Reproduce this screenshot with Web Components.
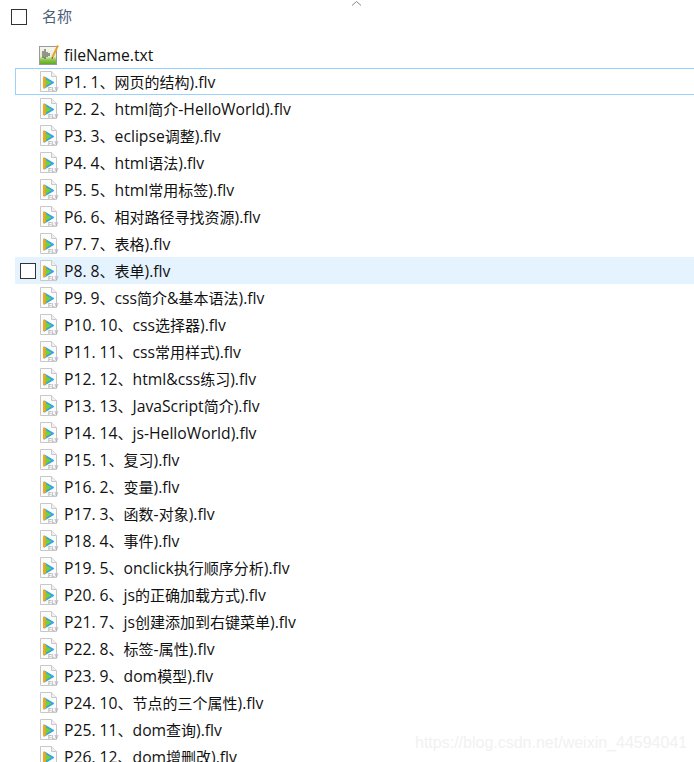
<!DOCTYPE html>
<html>
<head>
<meta charset="utf-8">
<style>
  html, body { margin: 0; height: 762px; overflow: hidden; background: #fff; }
</style>
</head>
<body>
<file-list></file-list>

<script>
const files = [
  "P1. 1、网页的结构).flv", "P2. 2、html简介-HelloWorld).flv", "P3. 3、eclipse调整).flv",
  "P4. 4、html语法).flv", "P5. 5、html常用标签).flv", "P6. 6、相对路径寻找资源).flv",
  "P7. 7、表格).flv", "P8. 8、表单).flv", "P9. 9、css简介&基本语法).flv",
  "P10. 10、css选择器).flv", "P11. 11、css常用样式).flv", "P12. 12、html&css练习).flv",
  "P13. 13、JavaScript简介).flv", "P14. 14、js-HelloWorld).flv", "P15. 1、复习).flv",
  "P16. 2、变量).flv", "P17. 3、函数-对象).flv", "P18. 4、事件).flv",
  "P19. 5、onclick执行顺序分析).flv", "P20. 6、js的正确加载方式).flv", "P21. 7、js创建添加到右键菜单).flv",
  "P22. 8、标签-属性).flv", "P23. 9、dom模型).flv", "P24. 10、节点的三个属性).flv",
  "P25. 11、dom查询).flv", "P26. 12、dom增删改).flv"
];

const txtIcon = `<svg width="22" height="22" viewBox="0 0 22 22">
  <defs><linearGradient id="g" x1="0" y1="0" x2="0" y2="1">
    <stop offset="0" stop-color="#f7f7f2"/><stop offset=".55" stop-color="#e6edd2"/><stop offset=".75" stop-color="#8cc63f"/><stop offset="1" stop-color="#5aa821"/>
  </linearGradient></defs>
  <rect x="1.5" y="2.5" width="17" height="18" fill="url(#g)" stroke="#9a9a9a"/>
  <path d="M5 7v7M7 5v10M9 8v5M11 9v3" stroke="#3a3a3a" stroke-width="1" fill="none"/>
  <path d="M14.5 13L20 1.5" stroke="#e8a030" stroke-width="2" fill="none"/>
  <path d="M14.5 13l-.5 2" stroke="#555" fill="none"/>
</svg>`;

const flvIcon = `<svg width="22" height="22" viewBox="0 0 22 22">
  <path d="M2.5 .5h11l5 5v15h-16z" fill="#fcfcfc" stroke="#c8c8c8"/>
  <path d="M13.5 .5v5h5" fill="#f0f0f0" stroke="#c8c8c8"/>
  <path d="M6.5 6.5L15 11.5L6.5 16.5z" fill="#2aa9e6" stroke="#2aa9e6" stroke-width="2" stroke-linejoin="round"/>
  <path d="M5.5 6L7.5 7V16L5.5 17z" fill="#f5a51e" stroke="#f5a51e" stroke-linejoin="round"/>
  <path d="M7.5 8L13.5 11.5L7.5 15z" fill="#7ecb35"/>
  <text x="10" y="20" font-family="Liberation Sans, sans-serif" font-size="5.6" font-weight="700" fill="#b0b0b0">FLV</text>
</svg>`;

class CheckBox extends HTMLElement {
  constructor() {
    super();
    this.attachShadow({ mode: "open" });
    this.shadowRoot.innerHTML = `
      <style>
        :host { display: block; width: 16px; height: 16px; box-sizing: border-box; border: 1px solid #333; background: #fff; }
      </style>`;
  }
}

class ListHeader extends HTMLElement {
  constructor() {
    super();
    this.attachShadow({ mode: "open" });
    this.shadowRoot.innerHTML = `
      <style>
        :host { display: flex; align-items: center; height: 33px; padding-left: 11px; position: relative; color: #4c607a; font-size: 15px; }
        span { margin-left: 15px; position: relative; top: -1px; }
        svg { position: absolute; left: 351px; top: 0; }
      </style>
      <check-box></check-box>
      <span><slot></slot></span>
      <svg width="11" height="6" viewBox="0 0 11 6"><path d="M1 5.5L5.5 1.5L10 5.5" fill="none" stroke="#888"/></svg>`;
  }
}

class FileRow extends HTMLElement {
  constructor() {
    super();
    this.attachShadow({ mode: "open" });
    const icon = this.getAttribute("icon") === "txt" ? txtIcon : flvIcon;
    this.shadowRoot.innerHTML = `
      <style>
        :host { display: flex; align-items: center; box-sizing: border-box; height: 27px; margin: 0 -1px 0 15px; padding-left: 23px; position: relative; color: #111; white-space: nowrap; }
        :host([focused]) { outline: 1px solid #99d1ff; outline-offset: -1px; }
        :host([hovered]) { background: #e5f3ff; }
        check-box { display: none; position: absolute; left: 5px; top: 6px; }
        :host([hovered]) check-box { display: block; }
        svg { flex: none; margin-right: 4px; }
      </style>
      <check-box></check-box>
      ${icon}
      <span><slot></slot></span>`;
  }
}

// latin runs are a bit wider than the cjk ones in the original font
const markup = (name) =>
  name.replace(/[\x20-\x7e]+/g, (run) => `<span class="l">${run.replace("&", "&amp;")}</span>`);

class FileList extends HTMLElement {
  constructor() {
    super();
    this.attachShadow({ mode: "open" });
  }

  connectedCallback() {
    this.shadowRoot.innerHTML = `
      <style>
        :host { display: block; height: 762px; overflow: hidden; font: 15px "Open Sans", "Noto Sans CJK SC", sans-serif; }
        .l { font-size: 15.7px; }
        .spacer { height: 8px; }
        .watermark { position: absolute; left: 415px; top: 734px; font: 16px "Liberation Sans", sans-serif; color: #f1f1f1; }
      </style>
      <list-header>名称</list-header>
      <div class="spacer"></div>
      <file-row icon="txt"><span class="l">fileName.txt</span></file-row>
      ${files.map((name, i) => {
        const state = i === 0 ? "focused" : i === 7 ? "hovered" : "";
        return `<file-row ${state}>${markup(name)}</file-row>`;
      }).join("")}
      <div class="watermark">https://blog.csdn.net/weixin_44594041</div>`;
  }
}

customElements.define("check-box", CheckBox);
customElements.define("list-header", ListHeader);
customElements.define("file-row", FileRow);
customElements.define("file-list", FileList);
</script>
</body>
</html>
